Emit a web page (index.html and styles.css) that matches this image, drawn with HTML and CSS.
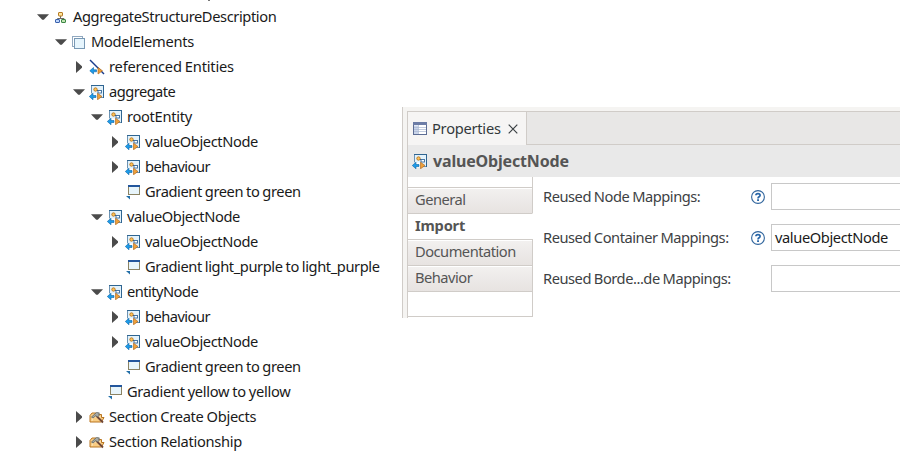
FILE: index.html
```html
<!DOCTYPE html>
<html lang="en">
<head>
<meta charset="utf-8">
<title>Model editor</title>
<link rel="stylesheet" href="styles.css">
</head>
<body>
<svg class="defs" width="0" height="0" aria-hidden="true">
  <symbol id="open" viewBox="0 0 12 12"><path d="M0 3.300h12L6.800 8.700H5.200z" fill="#4b4b4b"/></symbol>
  <symbol id="closed" viewBox="0 0 12 12"><path d="M3 0v12L9 6.800V5.200z" fill="#4b4b4b"/></symbol>
  <symbol id="tree" viewBox="0 0 16 16">
    <path d="M7.500 7v3M4.500 11V9.500H11V11" fill="none" stroke="#6d6b64"/>
    <rect x="5.500" y="3.500" width="4" height="3.500" rx=".5" fill="#ffe49a" stroke="#b57a24"/>
    <rect x="2.500" y="10.500" width="4" height="3" rx=".5" fill="#bcd4fb" stroke="#3b62ad"/>
    <rect x="8.500" y="10.500" width="4" height="3" rx=".5" fill="#bfe3b1" stroke="#3c8645"/>
  </symbol>
  <symbol id="layer" viewBox="0 0 16 16">
    <rect x="1.500" y="2.500" width="10" height="10" fill="#fff" stroke="#91a9c0"/>
    <rect x="3.500" y="4.500" width="10" height="10" fill="#e6f5fd" stroke="#7898b4"/>
  </symbol>
  <symbol id="edge" viewBox="0 0 16 16">
    <path d="M1 1l14 14" stroke="#183b8c" stroke-width="1.400"/>
    <path d="M.8 11.800L4.500 8.500v2.300h3v2h-3V15z" fill="#1e9be8" stroke="#0a64a8" stroke-width=".6"/>
    <path d="M13.500 11.800L9 8.500V15z" fill="#efa03a" stroke="#a86012" stroke-width=".6"/>
  </symbol>
  <symbol id="node" viewBox="0 0 16 16">
    <rect x="2.500" y="1.500" width="12" height="12" fill="#e3f2fb" stroke="#6c93b3"/>
    <path d="M2 1.500h13M14.500 1v13" stroke="#2f6591"/>
    <path d="M2 9.500h7v5H2z" fill="#fff"/>
    <circle cx="6.500" cy="5.500" r="1.700" fill="#ffc45a" stroke="#b8741b" stroke-width=".9"/>
    <path d="M8 6.500h1" stroke="#555"/>
    <rect x="9" y="6.500" width="3.500" height="2.500" fill="#fff" stroke="#39699a" stroke-width=".9"/>
    <path d="M.3 12.500l3.700-3.300v2.300h3v2H4v2.300z" fill="#1e9be8" stroke="#0a64a8" stroke-width=".6"/>
    <path d="M13 12.500L8.500 9.200v6.600z" fill="#efa03a" stroke="#a86012" stroke-width=".6"/>
  </symbol>
  <symbol id="style" viewBox="0 0 16 16">
    <rect x="3.500" y="1.500" width="11" height="9" fill="#e8f5fb" stroke="#8b8363"/>
    <path d="M3 2h12" stroke="#23569c" stroke-width="2"/>
    <path d="M1 12h4v3.500z" fill="#236fa8"/>
  </symbol>
  <symbol id="tools" viewBox="0 0 16 16">
    <path d="M1 13V6.500L3 4h4l1 1.500h4.500v3h2.500L12.500 13z" fill="#f9cd84" stroke="#b87521"/>
    <path d="M3 12l1-4h8" fill="none" stroke="#ffe5b5"/>
    <path d="M7.500 7l6.500 6.500" stroke="#704737" stroke-width="1.800"/>
    <path d="M2.500 8L7.500 3.500l3 .5-1 1 1 1-2 2L7 6.500 4 9z" fill="#a5aaa8" stroke="#5d6260" stroke-width=".8"/>
  </symbol>
  <symbol id="help" viewBox="0 0 14 14">
    <circle cx="7" cy="7" r="6.400" fill="#fff" stroke="#30659d" stroke-width="1.100"/>
    <path d="M4.900 5.300c0-2.400 4.200-2.300 4.200-.1 0 1.600-2.100 1.500-2.100 3.200" fill="none" stroke="#2866a8" stroke-width="1.700"/>
    <path d="M6.100 9.300H8V11H6.100z" fill="#2866a8"/>
  </symbol>
</svg>

<div class="tree">
  <div class="row l0"><svg class="arrow"><use href="#open"/></svg><svg class="icon"><use href="#tree"/></svg><span>AggregateStructureDescription</span></div>
  <div class="row l1"><svg class="arrow"><use href="#open"/></svg><svg class="icon"><use href="#layer"/></svg><span class="normal">ModelElements</span></div>
  <div class="row l2"><svg class="arrow"><use href="#closed"/></svg><svg class="icon"><use href="#edge"/></svg><span class="wide">referenced Entities</span></div>
  <div class="row l2"><svg class="arrow"><use href="#open"/></svg><svg class="icon"><use href="#node"/></svg><span class="tight">aggregate</span></div>
  <div class="row l3"><svg class="arrow"><use href="#open"/></svg><svg class="icon"><use href="#node"/></svg><span class="normal">rootEntity</span></div>
  <div class="row l4"><svg class="arrow"><use href="#closed"/></svg><svg class="icon"><use href="#node"/></svg><span>valueObjectNode</span></div>
  <div class="row l4"><svg class="arrow"><use href="#closed"/></svg><svg class="icon"><use href="#node"/></svg><span class="tight">behaviour</span></div>
  <div class="row l4"><svg class="arrow"></svg><svg class="icon"><use href="#style"/></svg><span>Gradient green to green</span></div>
  <div class="row l3"><svg class="arrow"><use href="#open"/></svg><svg class="icon"><use href="#node"/></svg><span>valueObjectNode</span></div>
  <div class="row l4"><svg class="arrow"><use href="#closed"/></svg><svg class="icon"><use href="#node"/></svg><span>valueObjectNode</span></div>
  <div class="row l4"><svg class="arrow"></svg><svg class="icon"><use href="#style"/></svg><span>Gradient light_purple to light_purple</span></div>
  <div class="row l3"><svg class="arrow"><use href="#open"/></svg><svg class="icon"><use href="#node"/></svg><span class="tight">entityNode</span></div>
  <div class="row l4"><svg class="arrow"><use href="#closed"/></svg><svg class="icon"><use href="#node"/></svg><span class="tight">behaviour</span></div>
  <div class="row l4"><svg class="arrow"><use href="#closed"/></svg><svg class="icon"><use href="#node"/></svg><span>valueObjectNode</span></div>
  <div class="row l4"><svg class="arrow"></svg><svg class="icon"><use href="#style"/></svg><span>Gradient green to green</span></div>
  <div class="row l3"><svg class="arrow"></svg><svg class="icon"><use href="#style"/></svg><span class="normal">Gradient yellow to yellow</span></div>
  <div class="row l2"><svg class="arrow"><use href="#closed"/></svg><svg class="icon"><use href="#tools"/></svg><span class="normal">Section Create Objects</span></div>
  <div class="row l2"><svg class="arrow"><use href="#closed"/></svg><svg class="icon"><use href="#tools"/></svg><span class="normal">Section Relationship</span></div>
</div>

<div class="panel">
  <div class="view">
    <div class="tabbar">
      <div class="tab">
        <svg class="table-icon" viewBox="0 0 14 13"><rect x=".5" y=".5" width="13" height="12" fill="#fff" stroke="#5d6d94"/><path d="M0 1.500h14" stroke="#6d7da6" stroke-width="3"/><path d="M1 3.500h4v8.500H1z" fill="#cad5ea"/><path d="M5.500 3v9M1 5.500h12M1 7.500h12M1 9.500h12" stroke="#a9b7d1" stroke-width=".7"/></svg>
        <span class="tab-name">Properties</span>
        <svg class="close" viewBox="0 0 10 10"><path d="M.7.7l8.600 8.600M9.300.7L.7 9.300" stroke="#3b4144" stroke-width="1.200"/></svg>
      </div>
    </div>
    <div class="title"><svg class="icon"><use href="#node"/></svg><span>valueObjectNode</span></div>
    <div class="content">
      <div class="sections">
        <div class="spacer"></div>
        <div class="section">General</div>
        <div class="section selected">Import</div>
        <div class="section">Documentation</div>
        <div class="section">Behavior</div>
        <div class="rest"></div>
      </div>
      <div class="form">
        <div class="field"><span class="label">Reused Node Mappings:</span><svg class="help"><use href="#help"/></svg><div class="input"></div></div>
        <div class="field"><span class="label">Reused Container Mappings:</span><svg class="help"><use href="#help"/></svg><div class="input">valueObjectNode</div></div>
        <div class="field"><span class="label">Reused Borde...de Mappings:</span><svg class="help"></svg><div class="input"></div></div>
      </div>
    </div>
  </div>
</div>
</body>
</html>
```
FILE: styles.css
```css
* { box-sizing: border-box; }
body {
  margin: 0;
  width: 900px;
  height: 460px;
  overflow: hidden;
  display: flex;
  align-items: flex-start;
  background: #fff;
  color: #1a1a1a;
  font: 14.67px/25px "Noto Sans", sans-serif;
  letter-spacing: -0.4px;
  word-spacing: -0.5px;
  white-space: nowrap;
}
.defs { position: absolute; }
svg { flex: none; display: block; }
.tree { width: 402px; padding-top: 4px; flex: none; }
/* Lower edge of the item scrolled off above the list */
.tree::before {
  content: "";
  position: absolute;
  top: 0;
  left: 208px;
  width: 2px;
  height: 1px;
  background: #777;
}
.row { display: flex; align-items: center; height: 25px; }
.row span { margin-top: -1px; }
.row .normal { letter-spacing: -0.3px; }
.row .wide { letter-spacing: -0.2px; }
.row .tight { letter-spacing: -0.53px; }
.l0 { padding-left: 37px; }
.l1 { padding-left: 55px; }
.l2 { padding-left: 73px; }
.l3 { padding-left: 91px; }
.l4 { padding-left: 109px; }
.arrow { width: 12px; height: 12px; margin-right: 4px; }
.icon { width: 16px; height: 16px; margin-right: 4px; }
.panel {
  flex: 1;
  height: 211px;
  margin-top: 107px;
  padding: 4px 0 0 4px;
  background: #f5f4f2;
  border-left: 1px solid #d0ccc8;
}
.view {
  height: 207px;
  border-top: 1px solid #d0ccc8;
  border-left: 1px solid #d0ccc8;
  background: #fff;
  color: #555;
}
.tabbar { height: 33px; background: #e8e7e6; display: flex; box-shadow: inset 0 -1px #d0ccc8; }
.tab {
  width: 119px;
  height: 33px;
  padding: 0 0 0 5px;
  display: flex;
  align-items: center;
  background: #f6f5f4;
  border-right: 1px solid #d0ccc8;
  color: #33393b;
}
.table-icon { width: 14px; height: 13px; margin-right: 5px; }
.tab-name { width: 69px; letter-spacing: -0.25px; }
.close { width: 10px; height: 10px; margin-left: 7px; }
.title {
  height: 32px;
  padding-left: 4px;
  display: flex;
  align-items: center;
  background: #e9e9e9;
  font-size: 16px;
  font-weight: bold;
  letter-spacing: -0.17px;
}
.title .icon { margin-right: 5px; }
.title span { margin-top: 1px; }
.content { display: flex; height: 141px; }
.sections { width: 125px; display: flex; flex-direction: column; }
.spacer { height: 10px; border-right: 1px solid #d0ccc8; }
.section {
  height: 26px;
  padding-left: 7px;
  line-height: 23px;
  border-top: 1px solid #d0ccc8;
  border-right: 1px solid #d0ccc8;
  background: linear-gradient(#fff 1px, #f2f0ef 1px, #e7e3e1);
  letter-spacing: -0.5px;
}
.selected { background: #fff; border-right-color: #fff; font-weight: bold; letter-spacing: -0.2px; }
.rest { height: 26px; border: 1px solid #d0ccc8; border-left: 0; }
.form { flex: 1; padding: 6px 0 0 10px; color: #3d4143; }
.field { display: flex; align-items: center; height: 27px; margin-bottom: 14px; }
.label { width: 208px; letter-spacing: -0.46px; }
.help { width: 14px; height: 14px; margin-right: 6px; }
.input {
  flex: 1;
  height: 27px;
  padding-left: 3px;
  border: 1px solid #c8c8c8;
  border-right: 0;
  color: #1a1a1a;
}
```
